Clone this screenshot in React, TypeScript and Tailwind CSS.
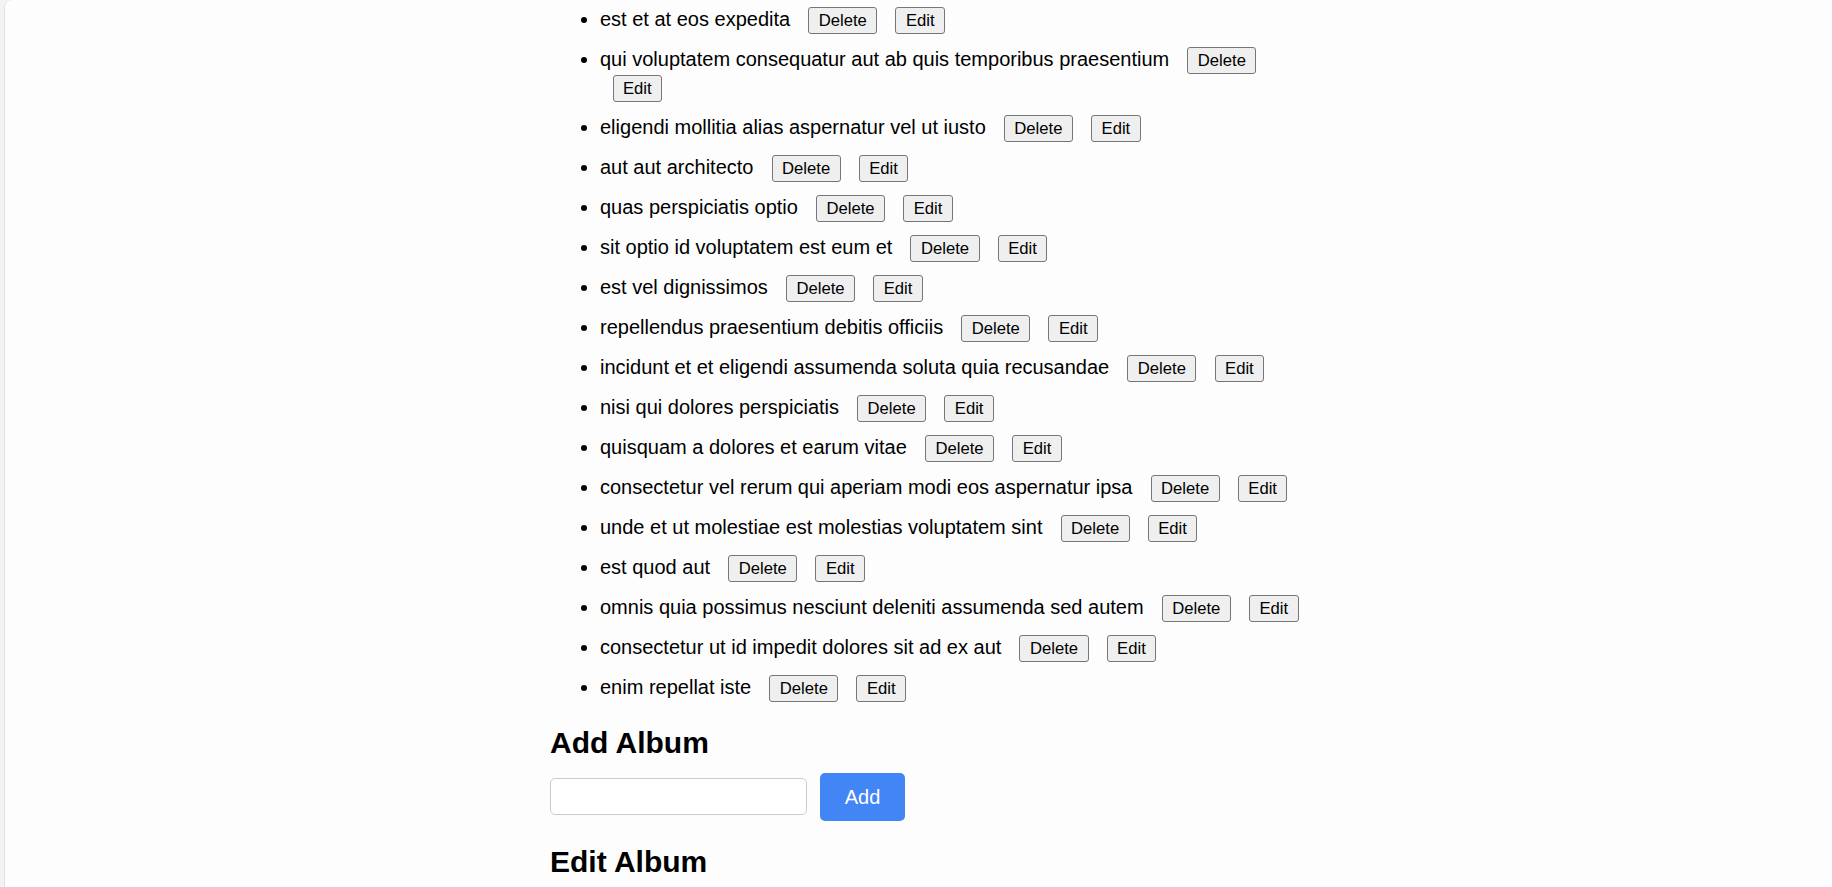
import React from "react";

const albums = [
  "est et at eos expedita",
  "qui voluptatem consequatur aut ab quis temporibus praesentium",
  "eligendi mollitia alias aspernatur vel ut iusto",
  "aut aut architecto",
  "quas perspiciatis optio",
  "sit optio id voluptatem est eum et",
  "est vel dignissimos",
  "repellendus praesentium debitis officiis",
  "incidunt et et eligendi assumenda soluta quia recusandae",
  "nisi qui dolores perspiciatis",
  "quisquam a dolores et earum vitae",
  "consectetur vel rerum qui aperiam modi eos aspernatur ipsa",
  "unde et ut molestiae est molestias voluptatem sint",
  "est quod aut",
  "omnis quia possimus nesciunt deleniti assumenda sed autem",
  "consectetur ut id impedit dolores sit ad ex aut",
  "enim repellat iste",
];

function SmallButton({ label }: { label: string }) {
  return (
    <button
      type="button"
      className="ml-[12.5px] inline-block h-[27px] rounded-[3px] border border-[#767676] bg-[#efefef] px-[9.5px] py-[3px] text-[16.67px] leading-[19px] text-black"
    >
      {label}
    </button>
  );
}

export default function App() {
  return (
    <div
      className="flex h-[887px] overflow-hidden bg-[#f3f3f3] text-black"
      style={{ fontFamily: '"Liberation Sans", Arial, sans-serif' }}
    >
      <div className="w-[4px] shrink-0" />
      <div className="flex-1 rounded-tl-[8px] border-l border-[#e2e2e2] bg-[#fdfdfd] pt-[6px]">
        <div className="ml-[545px] w-[760px]">
          <ul className="list-disc pl-[50px]">
            {albums.map((title) => (
              <li key={title} className="mb-[12px] text-[20px] leading-[27px]">
                {title} <SmallButton label="Delete" /> <SmallButton label="Edit" />
              </li>
            ))}
          </ul>

          <h2 className="mt-[24px] mb-[12px] text-[30px] font-bold leading-[34.5px]">
            Add Album
          </h2>
          <div className="flex items-center gap-[13px]">
            <input
              type="text"
              className="h-[37px] w-[257px] rounded-[5px] border border-[#cccccc] bg-white px-2 text-[20px] outline-none"
            />
            <button
              type="button"
              className="h-[48px] w-[85px] rounded-[5px] bg-[#4285f4] text-[20px] text-white"
            >
              Add
            </button>
          </div>

          <h2 className="mt-[24px] mb-[12px] text-[30px] font-bold leading-[34.5px]">
            Edit Album
          </h2>
        </div>
      </div>
    </div>
  );
}
